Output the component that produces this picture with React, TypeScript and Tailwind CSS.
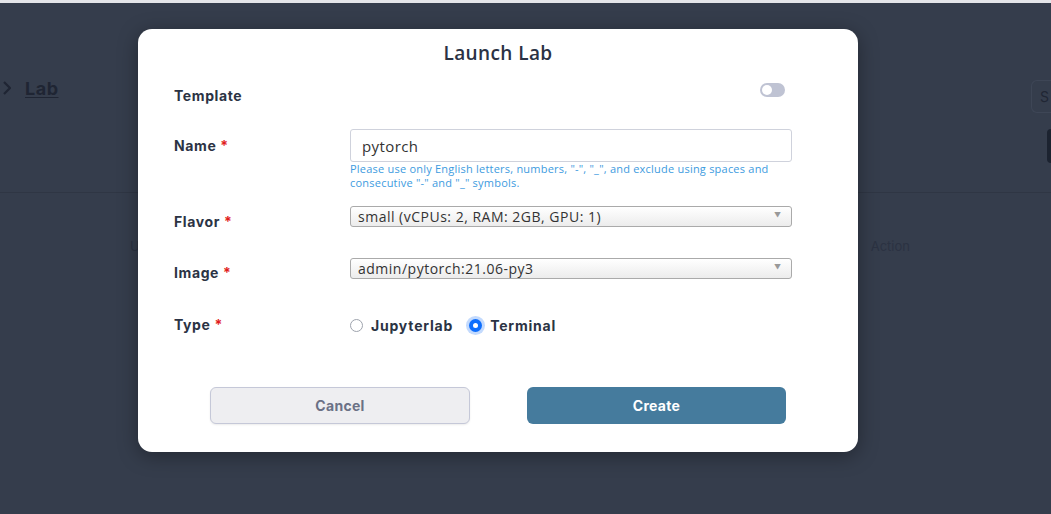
import React, { useState } from 'react';

const Label = ({ text, required, offset }: { text: string; required?: boolean; offset: string }) => (
  <div className={`w-[176px] shrink-0 h-5 text-[14px] leading-5 font-bold tracking-[0.6px] text-[#2b3344] ${offset}`}>
    {text}
    {required && <span className="text-[#e11d1d] ml-1">*</span>}
  </div>
);

const SelectBox = ({ value }: { value: string }) => (
  <div className="flex-1 h-[21px] flex items-center justify-between rounded-[3px] border border-[#aaaaaa] bg-gradient-to-b from-white to-[#ececec] pl-[7px] pr-[10px]">
    <span className="text-[14px] tracking-[0.5px] text-[#333] font-['Open_Sans',sans-serif] leading-none">{value}</span>
    <span className="text-[7px] text-[#999]">▼</span>
  </div>
);

const Radio = ({ label, checked, onSelect, className }: { label: string; checked: boolean; onSelect: () => void; className?: string }) => (
  <label className={`flex items-center cursor-pointer ${className ?? ''}`} onClick={onSelect}>
    <span className={`w-[13px] h-[13px] rounded-full flex items-center justify-center ${checked ? 'bg-[#0d6efd] ring-[3px] ring-[#c3dafd]' : 'border border-[#9ea3ad] bg-white'}`}>
      {checked && <span className="w-[5px] h-[5px] rounded-full bg-white" />}
    </span>
    <span className="ml-[8px] mt-[1px] tracking-[0.8px]">{label}</span>
  </label>
);

const App: React.FC = () => {
  const [type, setType] = useState('terminal');
  const [name, setName] = useState('pytorch');

  return (
    <div className="relative w-[1051px] h-[514px] overflow-hidden bg-[#353d4c] font-['Inter',sans-serif]">
      <div className="h-[3px] bg-[#e4e5e9]" />

      {/* page behind the dialog */}
      <div className="flex justify-between h-[190px] border-b border-[#2f3644]">
        <div className="flex items-center gap-[14px] pl-[3px] h-[170px] text-[#1f2533]">
          <svg width="8" height="14" viewBox="0 0 8 14" fill="none" stroke="currentColor" strokeWidth="2.2">
            <path d="M1 1l6 6-6 6" />
          </svg>
          <span className="text-[18px] font-bold tracking-[0.5px] underline underline-offset-2">Lab</span>
        </div>
        <div className="flex flex-col gap-[16px] pt-[77px] items-end">
          <div className="w-[20px] h-[33px] rounded-l-[6px] border border-r-0 border-[#3e4656] text-[14px] text-[#202634] pl-[8px] leading-[31px]">S</div>
          <div className="w-[4px] h-[34px] rounded-l-[6px] bg-[#1c2330]" />
        </div>
      </div>
      <div className="flex justify-between pt-[44px] pl-[130px] pr-[141px] text-[13px] text-[#2b3242]">
        <span>U</span>
        <span>Action</span>
      </div>

      {/* dialog */}
      <div className="absolute left-[138px] top-[29px] w-[720px] h-[423px] rounded-[14px] bg-white shadow-[0_4px_20px_rgba(0,0,0,0.35)] flex flex-col pl-[36px] pr-[66px]">
        <h2 className="mt-[12px] h-[24px] leading-6 text-center text-[19px] tracking-[0.4px] font-semibold text-[#2b3244] pl-[30px] font-['Open_Sans',sans-serif]">
          Launch Lab
        </h2>

        <div className="mt-[21px] flex h-[20px]">
          <Label text="Template" offset="" />
          <div className="flex-1 flex justify-end pr-[7px]">
            <div className="-mt-[3px] w-[25px] h-[14px] rounded-full bg-[#bfc3d3] flex items-center pl-[2px]">
              <div className="w-[10px] h-[10px] rounded-full bg-white" />
            </div>
          </div>
        </div>

        <div className="mt-[23px] flex h-[61px]">
          <Label text="Name" required offset="mt-[7px]" />
          <div className="flex-1">
            <input
              value={name}
              onChange={(e) => setName(e.target.value)}
              className="w-full h-[33px] rounded-[3px] border border-[#cfd2dc] px-[11px] text-[15px] tracking-[0.4px] text-[#333] font-['Open_Sans',sans-serif] outline-none"
            />
            <p className="h-[28px] text-[11px] leading-[14px] tracking-[0.22px] text-[#3d9be0] font-['Open_Sans',sans-serif]">
              Please use only English letters, numbers, "-", "_", and exclude using spaces and consecutive "-" and "_" symbols.
            </p>
          </div>
        </div>

        <div className="mt-[16px] flex h-[21px]">
          <Label text="Flavor" required offset="mt-[6px]" />
          <SelectBox value="small (vCPUs: 2, RAM: 2GB, GPU: 1)" />
        </div>

        <div className="mt-[31px] flex h-[21px]">
          <Label text="Image" required offset="mt-[5px]" />
          <SelectBox value="admin/pytorch:21.06-py3" />
        </div>

        <div className="mt-[36px] flex h-[20px] items-center">
          <Label text="Type" required offset="" />
          <div className="flex items-center text-[14px] font-bold text-[#2b3344]">
            <Radio label="Jupyterlab" checked={type === 'jupyterlab'} onSelect={() => setType('jupyterlab')} />
            <Radio label="Terminal" checked={type === 'terminal'} onSelect={() => setType('terminal')} className="ml-[16px]" />
          </div>
        </div>

        <div className="mt-[52px] flex justify-between pl-[36px] pr-[6px]">
          <button className="w-[260px] h-[37px] rounded-[6px] border border-[#c5c8d8] bg-[#eeeef1] text-[14px] font-bold tracking-[0.3px] text-[#6b7186] shadow-[0_1px_2px_rgba(0,0,0,0.08)]">
            Cancel
          </button>
          <button className="w-[259px] h-[37px] rounded-[6px] bg-[#457b9d] text-[14px] font-bold tracking-[0.3px] text-white">
            Create
          </button>
        </div>
      </div>
    </div>
  );
};

export default App;
